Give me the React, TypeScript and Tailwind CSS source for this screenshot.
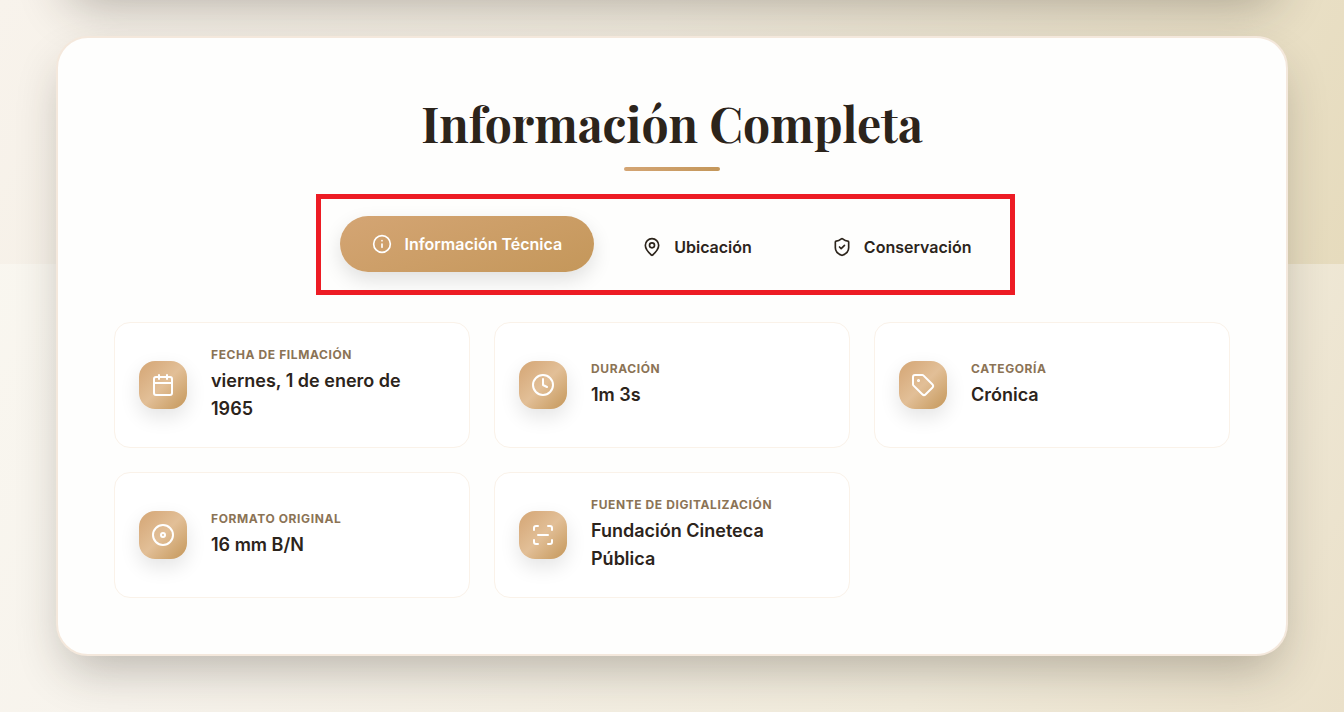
import { useState } from "react";
import { Calendar, Clock, Disc, Info, MapPin, ScanLine, ShieldCheck, Tag } from "lucide-react";
import type { LucideIcon } from "lucide-react";

type Tab = { label: string; icon: LucideIcon };
type Fact = { label: string; value: string; icon: LucideIcon };

const tabs: Tab[] = [
  { label: "Información Técnica", icon: Info },
  { label: "Ubicación", icon: MapPin },
  { label: "Conservación", icon: ShieldCheck },
];

const facts: Fact[] = [
  { label: "Fecha de filmación", value: "viernes, 1 de enero de 1965", icon: Calendar },
  { label: "Duración", value: "1m 3s", icon: Clock },
  { label: "Categoría", value: "Crónica", icon: Tag },
  { label: "Formato original", value: "16 mm B/N", icon: Disc },
  { label: "Fuente de digitalización", value: "Fundación Cineteca Pública", icon: ScanLine },
];

function FactCard({ label, value, icon: Icon }: Fact) {
  return (
    <div className="flex items-center gap-6 rounded-2xl border border-[#faf2e9] bg-white p-6">
      <div className="flex size-12 shrink-0 items-center justify-center rounded-2xl bg-[linear-gradient(135deg,#d4a574_0%,#e2bf97_50%,#c4975a_100%)] text-white shadow-[0_8px_20px_rgba(0,0,0,0.11)]">
        <Icon size={24} strokeWidth={2} aria-hidden="true" />
      </div>
      <dl className="min-w-0">
        <dt className="mb-1 text-xs font-bold uppercase tracking-wider text-[#8b7355]">{label}</dt>
        <dd className="text-lg leading-7 font-semibold text-[#2c241b]">{value}</dd>
      </dl>
    </div>
  );
}

export default function App() {
  const [active, setActive] = useState(0);

  return (
    <div className="min-h-screen overflow-hidden bg-[linear-gradient(120deg,#faf8f1_0%,#f7f3ec_30%,#f1ebdb_75%,#eae0c9_100%)] font-['Inter','Liberation_Sans',sans-serif]">
      <div className="flex flex-col bg-[linear-gradient(120deg,#f8f3ec_0%,#f2ecdf_45%,#e6dbbd_100%)] bg-[length:100%_264px] bg-no-repeat px-14 pb-14">
        {/* Lower edge of the preceding card; only its shadow reaches the viewport */}
        <div className="-mt-28 mb-11 h-26 shrink-0 rounded-[32px] bg-[#fefefd] shadow-[0_25px_50px_-12px_rgba(44,36,27,0.32)]" />
        <main className="rounded-[32px] border-2 border-[#f4e8dc] bg-[#fefefd] p-14 shadow-[0_22px_48px_-10px_rgba(44,36,27,0.3)]">
          <h1 className="text-center font-['Playfair_Display','Liberation_Serif',serif] text-5xl leading-[58px] font-bold text-[#2c241b]">
            Información Completa
          </h1>
          <div className="mx-auto mt-[15px] h-1 w-24 rounded-full bg-linear-to-r from-[#d4a574] to-[#c4975a]" />

          <div className="relative mx-auto mt-12 flex w-fit gap-4" role="tablist">
            {tabs.map(({ label, icon: Icon }, i) => (
              <button
                key={label}
                type="button"
                role="tab"
                aria-selected={i === active}
                onClick={() => setActive(i)}
                className={
                  i === active
                    ? "flex h-14 -translate-y-[3px] items-center gap-3 rounded-full bg-[linear-gradient(160deg,#d4a574,#c4975a)] px-8 text-base font-semibold text-white shadow-[0_8px_20px_rgba(0,0,0,0.12)]"
                    : "flex h-14 items-center gap-3 rounded-full px-8 text-base font-semibold text-[#2c241b]"
                }
              >
                <Icon size={20} strokeWidth={2} aria-hidden="true" />
                {label}
              </button>
            ))}
            <div className="pointer-events-none absolute -top-[25px] -right-[11px] -bottom-5 -left-6 border-5 border-[#ed1c24]" />
          </div>

          <div className="mt-[47px] grid grid-cols-3 gap-6">
            {facts.map((fact) => (
              <FactCard key={fact.label} {...fact} />
            ))}
          </div>
        </main>
      </div>
    </div>
  );
}
